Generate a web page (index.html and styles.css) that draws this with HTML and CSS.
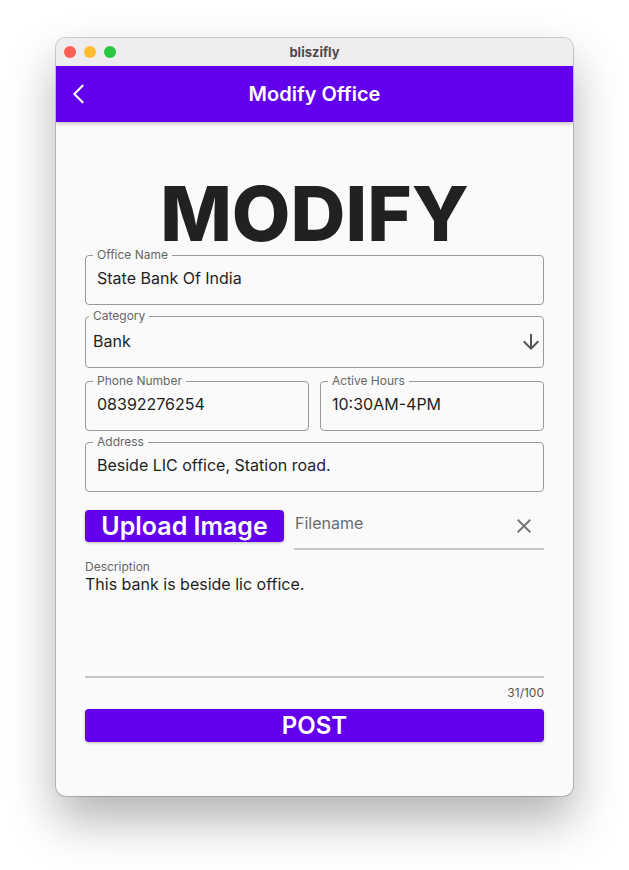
FILE: index.html
```html
<!DOCTYPE html>
<html>
<head>
<meta charset="utf-8">
<link rel="stylesheet" href="styles.css">
</head>
<body>
<div class="window">
  <div class="titlebar">
    <div class="lights">
      <span class="light red"></span>
      <span class="light yellow"></span>
      <span class="light green"></span>
    </div>
    <div class="wtitle">bliszifly</div>
  </div>
  <div class="appbar">
    <svg class="back" width="24" height="24" viewBox="0 0 24 24"><path d="M17 2 L7 12 L17 22" fill="none" stroke="#fff" stroke-width="2.6" stroke-linecap="round" stroke-linejoin="round" transform="translate(2.5 2) scale(0.83)"/></svg>
    <div class="apptitle">Modify Office</div>
  </div>
  <div class="content">
    <h1 class="heading">MODIFY</h1>
    <div class="field">
      <span class="flabel">Office Name</span>
      <div class="fvalue">State Bank Of India</div>
    </div>
    <div class="field select">
      <span class="flabel">Category</span>
      <div class="fvalue">Bank</div>
      <svg class="arrow" width="24" height="24" viewBox="0 0 24 24"><path fill="#555" d="M20 12l-1.41-1.41L13 16.17V4h-2v12.17l-5.58-5.59L4 12l8 8 8-8z"/></svg>
    </div>
    <div class="row2">
      <div class="field">
        <span class="flabel">Phone Number</span>
        <div class="fvalue">08392276254</div>
      </div>
      <div class="field">
        <span class="flabel">Active Hours</span>
        <div class="fvalue">10:30AM-4PM</div>
      </div>
    </div>
    <div class="field">
      <span class="flabel">Address</span>
      <div class="fvalue">Beside LIC office, Station road.</div>
    </div>
    <div class="uploadrow">
      <button class="upload">Upload Image</button>
      <div class="filename">
        <span>Filename</span>
        <svg width="24" height="24" viewBox="0 0 24 24"><path fill="#777" d="M19 6.41L17.59 5 12 10.59 6.41 5 5 6.41 10.59 12 5 17.59 6.41 19 12 13.41 17.59 19 19 17.59 13.41 12z"/></svg>
      </div>
    </div>
    <div class="desc">
      <div class="dlabel">Description</div>
      <div class="dtext">This bank is beside lic office.</div>
    </div>
    <div class="counter">31/100</div>
    <button class="post">POST</button>
  </div>
</div>
</body>
</html>
```
FILE: styles.css
```css
* { box-sizing: border-box; }
html, body { margin: 0; background: #ffffff; }
body {
  height: 870px;
  overflow: hidden;
  padding: 38px 0 0 56px;
  font-family: Inter, "Noto Sans", sans-serif;
}
.window {
  width: 517px;
  height: 758px;
  border-radius: 10px;
  overflow: hidden;
  background: #fafafa;
  box-shadow: 0 0 0 1px rgba(0,0,0,0.18), 0 24px 48px rgba(0,0,0,0.3);
  display: flex;
  flex-direction: column;
}
.titlebar {
  height: 28px;
  background: #efedf0;
  display: flex;
  align-items: center;
  position: relative;
}
.lights {
  display: flex;
  gap: 8px;
  padding-left: 8px;
}
.light {
  width: 12px; height: 12px; border-radius: 50%;
  display: block;
}
.red { background: #fe5f57; }
.yellow { background: #febc2e; }
.green { background: #28c840; }
.wtitle {
  position: absolute;
  left: 0; right: 0; top: 0;
  line-height: 28px;
  text-align: center;
  font-size: 13px;
  font-weight: 700;
  color: #4c4c4c;
}
.appbar {
  height: 56px;
  background: #6200ee;
  display: flex;
  align-items: center;
  position: relative;
  box-shadow: 0 2px 4px rgba(0,0,0,0.2);
  z-index: 1;
}
.back { margin-left: 10px; }
.apptitle {
  position: absolute;
  left: 0; right: 0;
  text-align: center;
  color: #fff;
  font-size: 20px;
  font-weight: 600;
  line-height: 56px;
}
.content {
  padding: 52px 29px 0 29px;
  display: flex;
  flex-direction: column;
}
.heading {
  margin: 0;
  font-size: 76px;
  line-height: 74px;
  height: 74px;
  font-weight: 800;
  text-align: center;
  color: #212121;
  letter-spacing: 0;
  padding-top: 2px;
}
.field {
  position: relative;
  border: 1px solid #9a9a9a;
  border-radius: 4px;
  height: 50px;
  padding: 12px 11px 0 11px;
  margin-top: 11px;
}
.heading + .field { margin-top: 7px; }
.flabel {
  position: absolute;
  top: -8px;
  left: 7px;
  padding: 0 4px;
  background: #fafafa;
  font-size: 12px;
  line-height: 14px;
  color: #666;
}
.fvalue {
  font-size: 16px;
  line-height: 20px;
  color: #1f1f1f;
}
.select {
  height: 52px;
  padding: 14px 7px 0 7px;
}
.select .flabel { left: 3px; }
.arrow {
  position: absolute;
  right: 0px;
  top: 13px;
}
.row2 {
  display: grid;
  grid-template-columns: 1fr 1fr;
  column-gap: 11px;
  margin-top: 13px;
}
.row2 .field { margin-top: 0; }
.uploadrow {
  display: flex;
  gap: 10px;
  margin-top: 18px;
  align-items: flex-start;
}
.upload {
  width: 199px;
  height: 32px;
  border: none;
  border-radius: 4px;
  background: #6200ee;
  color: #fff;
  font-family: inherit;
  font-size: 25px;
  font-weight: 600;
  padding: 0;
  line-height: 32px;
  box-shadow: 0 1px 3px rgba(0,0,0,0.25);
}
.filename {
  flex: 1;
  height: 40px;
  border-bottom: 2px solid #c6c6c6;
  display: flex;
  justify-content: space-between;
  align-items: flex-start;
  padding: 3px 8px 0 1px;
  color: #6b6b6b;
  font-size: 16px;
  line-height: 20px;
}
.filename svg { margin-top: 1px; }
.desc {
  margin-top: 10px;
  height: 118px;
  border-bottom: 2px solid #c6c6c6;
}
.dlabel {
  font-size: 12px;
  line-height: 14px;
  color: #666;
}
.dtext {
  font-size: 16px;
  line-height: 20px;
  color: #1f1f1f;
}
.counter {
  text-align: right;
  font-size: 12px;
  line-height: 14px;
  color: #555;
  margin-top: 8px;
}
.post {
  margin-top: 9px;
  height: 33px;
  border: none;
  border-radius: 4px;
  background: #6200ee;
  color: #fff;
  font-family: inherit;
  font-size: 24px;
  font-weight: 600;
  line-height: 33px;
  padding: 0;
  box-shadow: 0 1px 3px rgba(0,0,0,0.25);
}
```
